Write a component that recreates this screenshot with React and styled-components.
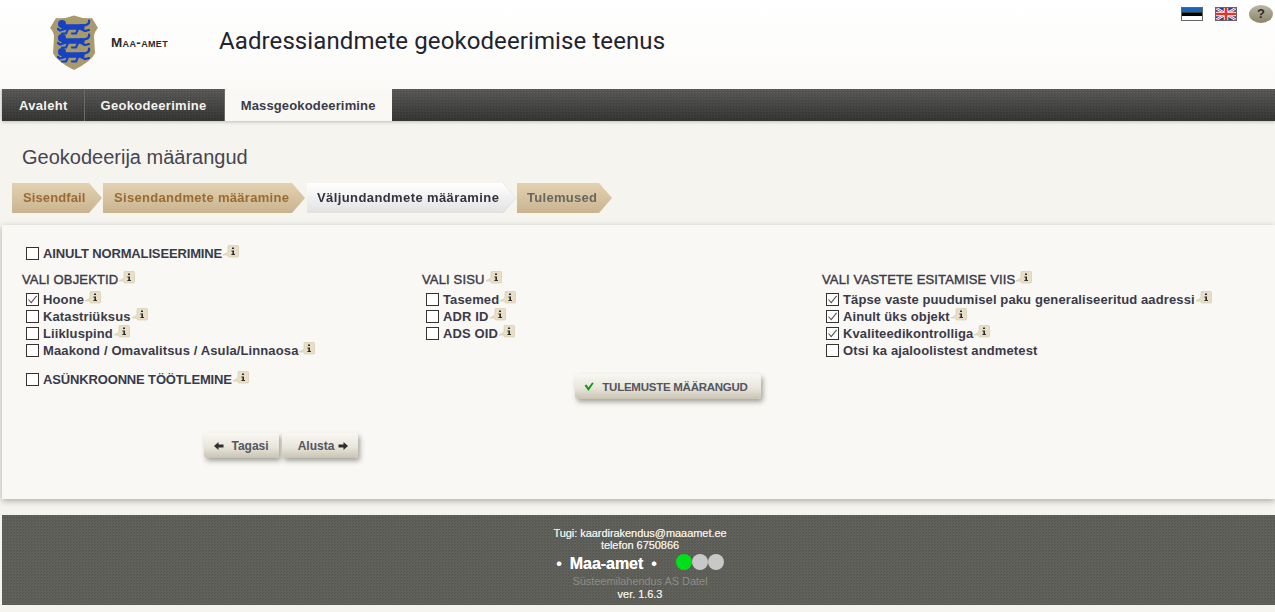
import React from 'react'
import styled, { createGlobalStyle, css } from 'styled-components'

const GlobalStyle = createGlobalStyle`
  html, body { margin: 0; padding: 0; }
  body {
    background: #f0eee7;
    font-family: "Liberation Sans", Arial, sans-serif;
    color: #3b3b4b;
  }
`

const weave = css`
  linear-gradient(45deg, rgba(0,0,0,.09) 25%, transparent 25%, transparent 75%, rgba(0,0,0,.09) 75%),
  linear-gradient(45deg, rgba(255,255,255,.04) 25%, transparent 25%, transparent 75%, rgba(255,255,255,.04) 75%)
`

const Page = styled.div`
  width: 1275px;
  height: 612px;
  overflow: hidden;
  background: #f5f4ef;
`

const Header = styled.header`
  height: 89px;
  display: flex;
  background: linear-gradient(#ffffff, #fbfaf8);
  position: relative;
`

const LogoBlock = styled.div`
  display: flex;
  align-items: center;
  width: 219px;
  padding: 15px 0 0 50px;
  box-sizing: border-box;
  height: 70px;
`

const LogoName = styled.span`
  margin: 0 0 0 13px;
  font-size: 13.5px;
  font-weight: bold;
  font-variant: small-caps;
  letter-spacing: .35px;
  color: #2a2a2a;
  white-space: nowrap;
`

const SiteTitle = styled.h1`
  margin: 27px 0 0;
  font: 400 24px/28px Roboto, sans-serif;
  color: #23232f;
  letter-spacing: .1px;
`

const Tools = styled.div`
  position: absolute;
  top: 5px;
  right: 2px;
  display: flex;
  align-items: flex-start;
`

const Flag = styled.svg`
  width: 22px;
  height: 14px;
  margin: 2px 12px 0 0;
  border: 1px solid #666;
  display: block;
  box-sizing: border-box;
`

const Help = styled.div`
  width: 24px;
  height: 18px;
  border-radius: 50%;
  background: linear-gradient(#bcb7a2, #8b8468);
  color: #2b2b2b;
  font: bold 13px/18px "Liberation Sans", sans-serif;
  text-align: center;
`

const Nav = styled.nav`
  margin-left: 2px;
  height: 32px;
  display: flex;
  background-color: #444;
  background-image: ${weave}, linear-gradient(#585857, #333332);
  background-size: 3px 3px, 3px 3px, 100% 100%;
  background-position: 0 0, 1px 1px, 0 0;
  box-shadow: 0 -1px 3px rgba(0,0,0,.25), 0 2px 3px rgba(0,0,0,.12);
`

const NavItem = styled.a`
  display: block;
  height: 32px;
  padding: 0 ${(p) => p.$right}px 0 ${(p) => p.$left}px;
  font: bold 13px/33px "Liberation Sans", sans-serif;
  color: ${(p) => (p.$active ? '#3b3b4b' : '#f4f3ee')};
  background: ${(p) => (p.$active ? '#f9f8f4' : 'transparent')};
  border-right: ${(p) => (p.$active ? 'none' : '1px solid #6b6b6a')};
  letter-spacing: ${(p) => (p.$active ? '.15px' : '.3px')};
`

const Main = styled.main`
  padding: 23px 0 0;
`

const PageTitle = styled.h2`
  margin: 0 0 13px 22px;
  font: 400 20px/26px "Liberation Sans", sans-serif;
  color: #45454f;
`

const Steps = styled.div`
  display: flex;
  margin-left: 12px;
  height: 30px;
`

const StepWrap = styled.div`
  margin-right: ${(p) => p.$after}px;
  filter: drop-shadow(${(p) => (p.$current ? '.6px .6px 0 #b9b9b9' : '0 0 0 transparent')});
`

const Step = styled.div`
  height: 30px;
  width: ${(p) => p.$w}px;
  padding-left: ${(p) => p.$pad}px;
  box-sizing: border-box;
  font: bold 13px/30px "Liberation Sans", sans-serif;
  letter-spacing: ${(p) => p.$track}px;
  white-space: nowrap;
  clip-path: polygon(0 0, calc(100% - 13px) 0, 100% 50%, calc(100% - 13px) 100%, 0 100%);
  color: ${(p) => p.$color};
  background: ${(p) => (p.$current
    ? 'linear-gradient(#ffffff, #e2e2e2)'
    : 'linear-gradient(#e3d1b0, #c9b48f)')};
`

const Panel = styled.section`
  margin: 12px 0 0 2px;
  height: 274px;
  box-sizing: border-box;
  padding: 20px 0 0 20px;
  background: #f9f8f4;
  box-shadow: 0 2px 6px rgba(60,60,50,.4);
`

const Row = styled.div`
  display: flex;
  align-items: center;
  height: 17px;
  padding-left: 4px;
  margin-top: ${(p) => p.$top ?? 0}px;
  font-size: 13px;
  font-weight: bold;
  letter-spacing: ${(p) => (p.$caps ? '-.15px' : '.12px')};
  color: #3a3a4a;
  white-space: nowrap;
`

const Box = styled.span`
  width: 11px;
  height: 11px;
  border: 1px solid #333;
  background: #fff;
  margin-right: 4px;
  flex: none;
  display: block;
`

const Heading = styled.div`
  display: flex;
  align-items: center;
  height: 17px;
  margin: 9px 0 3px;
  font-size: 13px;
  letter-spacing: .15px;
  color: #3a3a4a;
  -webkit-text-stroke: .4px #3a3a4a;
  white-space: nowrap;
`

const Columns = styled.div`
  display: grid;
  grid-template-columns: 400px 400px 400px;
`

const Bottom = styled.div`
  display: grid;
  grid-template-columns: 553px auto;
`

const Button = styled.button`
  display: flex;
  align-items: center;
  justify-content: center;
  height: 25px;
  width: ${(p) => p.$w}px;
  padding: 0 0 0 ${(p) => p.$shift ?? 0}px;
  border: none;
  border-radius: 3px;
  background: linear-gradient(#f8f7f2 0%, #e9e6dc 55%, #c9c4b2 100%);
  box-shadow: 2px 3px 5px rgba(60,60,50,.45);
  font: bold 12px "Liberation Sans", sans-serif;
  color: #55555f;
  white-space: nowrap;
`

const ResultButton = styled(Button)`
  margin-top: 15px;
  padding-right: 4px;
  font-size: 11.5px;
  letter-spacing: -.25px;
`

const NavButtons = styled.div`
  display: flex;
  gap: 3px;
  margin: 34px 0 0 182px;
`

const Footer = styled.footer`
  margin: 16px 0 0 2px;
  height: 90px;
  box-sizing: border-box;
  padding: 12px 0 0 3px;
  background-color: #5f5f59;
  background-image: ${weave};
  background-size: 3px 3px;
  background-position: 0 0, 1px 1px;
  text-align: center;
  color: #eceae4;
  font-size: 11px;
  line-height: 12px;
  letter-spacing: -.05px;
  text-shadow: 0 0 .5px #eceae4;
`

const BrandRow = styled.div`
  display: flex;
  align-items: center;
  justify-content: center;
  height: 18px;
  margin-top: 4px;
  color: #fff;
  font-size: 16px;
`

const Brand = styled.span`
  font-weight: bold;
  margin: 0 8px;
`

const Dot = styled.span`
  width: 16px;
  height: 16px;
  border-radius: 50%;
  background: ${(p) => p.$color};
  display: block;
`

const Lights = styled.div`
  display: flex;
  margin: -5px 0 0 19px;
`

const Muted = styled.div`
  color: #8d8d87;
  text-shadow: none;
  margin-top: 2px;
  line-height: 13px;
`

const Version = styled.div`
  margin-top: 0;
  line-height: 13px;
`

const InfoSvg = styled.svg`
  width: 16px;
  height: 15px;
  margin: -3px 0 0 ${(p) => p.$gap ?? 1}px;
  flex: none;
`

const Info = ({ gap }) => (
  <InfoSvg viewBox="0 0 16 15" $gap={gap}>
    <path d="M5 1.5a1 1 0 0 1 1-1h8.5a1 1 0 0 1 1 1v9.5a1 1 0 0 1-1 1H6a1 1 0 0 1-1-1V10L0 10 5 7z" fill="#e8dfc6" stroke="#d2c8aa" strokeWidth=".6" />
    <path d="M9 2.5h2v1.6H9zM8.4 5.4H11v3.5h1v1.2H8.4V8.9h1V6.6h-1z" fill="#2c2c2c" />
  </InfoSvg>
)

const Check = ({ checked }) => (
  <Box>
    {checked && (
      <svg width="11" height="11" viewBox="0 0 11 11" style={{ display: 'block' }}>
        <path d="M1.5 5.5 4.2 8.6 9.6 1.8" fill="none" stroke="#555" strokeWidth="1.1" />
      </svg>
    )}
  </Box>
)

const Opt = ({ label, checked, info = true, top, caps }) => (
  <Row $top={top} $caps={caps}>
    <Check checked={checked} />
    {label}
    {info && <Info />}
  </Row>
)

// rough silhouette of the lion, stacked three times on the shield
const Lion = ({ y }) => (
  <g transform={`translate(0 ${y})`} fill="none" stroke="#1642c4" strokeLinecap="round">
    <circle cx="12" cy="4" r="4" fill="#1642c4" stroke="none" />
    <path d="M14 7H32" strokeWidth="5.4" />
    <path d="M31 5C36 6 40 4 39 0.5" strokeWidth="2.2" />
    <path d="M15 9 10 10.5 8 9M18 9 16 13.5H12M31 9 35 11 39 10M28 9 26 13.5H22" strokeWidth="2.2" />
  </g>
)

const Crest = () => (
  <svg width="48" height="55" viewBox="0 0 48 55" style={{ flex: 'none' }}>
    <path d="M6 3Q15 4 24 0.5 33 4 42 3L48 13Q44 17 44 22L45 38Q42 46 24 55 6 46 3 38L4 22Q4 17 0 13z" fill="#a99a6c" />
    <Lion y={5} />
    <Lion y={19} />
    <Lion y={33} />
  </svg>
)

const Arrow = ({ right }) => (
  <svg width="10" height="8" viewBox="0 0 10 8" style={{ margin: right ? '0 0 0 4px' : '0 7px 0 0', transform: right ? 'scaleX(-1)' : 'none' }}>
    <path d="M0 4 4.5 0V2.5H9.5V5.5H4.5V8z" fill="#2f2f2f" />
  </svg>
)

export default function App() {
  return (
    <Page>
      <GlobalStyle />
      <Header>
        <LogoBlock>
          <Crest />
          <LogoName>Maa-amet</LogoName>
        </LogoBlock>
        <SiteTitle>Aadressiandmete geokodeerimise teenus</SiteTitle>
        <Tools>
          <Flag viewBox="0 0 22 14" preserveAspectRatio="none">
            <rect width="22" height="5" fill="#1a63b8" />
            <rect y="5" width="22" height="4.5" fill="#000" />
            <rect y="9.5" width="22" height="5" fill="#fff" />
          </Flag>
          <Flag viewBox="0 0 22 14" preserveAspectRatio="none">
            <rect width="22" height="14" fill="#27408f" />
            <path d="M0 0 22 14M22 0 0 14" stroke="#fff" strokeWidth="3" />
            <path d="M0 0 22 14M22 0 0 14" stroke="#d8304a" strokeWidth="1" />
            <path d="M11 0V14M0 7H22" stroke="#fff" strokeWidth="5" />
            <path d="M11 0V14M0 7H22" stroke="#e0352f" strokeWidth="3" />
          </Flag>
          <Help>?</Help>
        </Tools>
      </Header>
      <Nav>
        <NavItem $left={17} $right={16}>Avaleht</NavItem>
        <NavItem $left={16} $right={17}>Geokodeerimine</NavItem>
        <NavItem $left={16} $right={16} $active>Massgeokodeerimine</NavItem>
      </Nav>
      <Main>
        <PageTitle>Geokodeerija määrangud</PageTitle>
        <Steps>
          <StepWrap $after={1}><Step $w={90} $pad={11} $track={.1} $color="#9a6a35">Sisendfail</Step></StepWrap>
          <StepWrap $after={2}><Step $w={202} $pad={11} $track={.3} $color="#9a6a35">Sisendandmete määramine</Step></StepWrap>
          <StepWrap $after={1} $current><Step $w={209} $pad={10} $track={.4} $color="#33333f" $current>Väljundandmete määramine</Step></StepWrap>
          <StepWrap $after={0}><Step $w={95} $pad={10} $track={.3} $color="#6a6660">Tulemused</Step></StepWrap>
        </Steps>
        <Panel>
          <Opt label="AINULT NORMALISEERIMINE" caps />
          <Columns>
            <div>
              <Heading>VALI OBJEKTID<Info /></Heading>
              <Opt label="Hoone" checked />
              <Opt label="Katastriüksus" />
              <Opt label="Liikluspind" />
              <Opt label="Maakond / Omavalitsus / Asula/Linnaosa" />
            </div>
            <div>
              <Heading>VALI SISU<Info /></Heading>
              <Opt label="Tasemed" />
              <Opt label="ADR ID" />
              <Opt label="ADS OID" />
            </div>
            <div>
              <Heading>VALI VASTETE ESITAMISE VIIS<Info /></Heading>
              <Opt label="Täpse vaste puudumisel paku generaliseeritud aadressi" checked />
              <Opt label="Ainult üks objekt" checked />
              <Opt label="Kvaliteedikontrolliga" checked />
              <Opt label="Otsi ka ajaloolistest andmetest" info={false} />
            </div>
          </Columns>
          <Bottom>
            <Opt label="ASÜNKROONNE TÖÖTLEMINE" top={12} caps />
            <ResultButton $w={186}>
              <svg width="10" height="9" viewBox="0 0 9 8" style={{ marginRight: 8 }}>
                <path d="M.5 3 2.2 2.3 4 5 7.3 .3 8.7 1 4 8z" fill="#0f9a12" />
              </svg>
              TULEMUSTE MÄÄRANGUD
            </ResultButton>
          </Bottom>
          <NavButtons>
            <Button $w={75}><Arrow />Tagasi</Button>
            <Button $w={76} $shift={6}>Alusta<Arrow right /></Button>
          </NavButtons>
        </Panel>
        <Footer>
          <div>Tugi: kaardirakendus@maaamet.ee</div>
          <div>telefon 6750866</div>
          <BrandRow>
            •<Brand>Maa-amet</Brand>•
            <Lights>
              <Dot $color="#00e01a" />
              <Dot $color="#c8c8c8" />
              <Dot $color="#c8c8c8" />
            </Lights>
          </BrandRow>
          <Muted>Süsteemilahendus AS Datel</Muted>
          <Version>ver. 1.6.3</Version>
        </Footer>
      </Main>
    </Page>
  )
}
